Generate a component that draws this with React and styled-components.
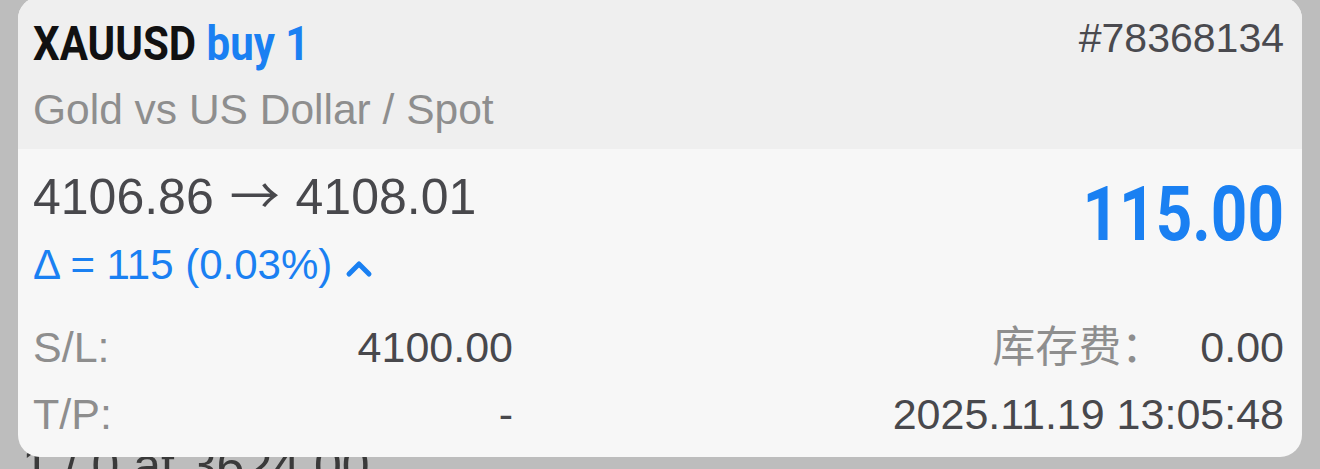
import React from 'react';
import styled, { createGlobalStyle } from 'styled-components';

const GlobalStyle = createGlobalStyle`
    html, body {
        margin: 0;
        padding: 0;
        background: #bdbdbd;
        width: 1320px;
        height: 469px;
        overflow: hidden;
    }
    body {
        font-family: "Liberation Sans", Arial, sans-serif;
    }
`;

const Page = styled.div`
    width: 1320px;
    height: 469px;
    overflow: hidden;
`;

const Card = styled.section`
    position: relative;
    z-index: 1;
    margin: -3px 18px 0 18px;
    border-radius: 22px;
    overflow: hidden;
    background: #f7f7f7;
`;

const Header = styled.header`
    background: #efefef;
    height: 152px;
    box-sizing: border-box;
    padding: 14px 18px 0 15px;
`;

const TopRow = styled.div`
    display: flex;
    justify-content: space-between;
    align-items: flex-start;
`;

// narrow bold face: Roboto squeezed horizontally
const Symbol = styled.h1`
    display: inline-block;
    margin: 0;
    font-family: Roboto, "Liberation Sans", sans-serif;
    font-weight: 700;
    font-size: 48px;
    line-height: 66px;
    color: #111;
    transform: scaleX(0.875);
    transform-origin: left center;
    white-space: nowrap;
`;

const Side = styled.span`
    color: #1a80f2;
`;

const Ticket = styled.div`
    margin-top: 2px;
    font-size: 41px;
    line-height: 50px;
    color: #4a4a4f;
`;

const Subtitle = styled.div`
    margin-top: 7px;
    font-size: 42.5px;
    line-height: 52px;
    color: #8e8e8e;
`;

const Body = styled.div`
    padding: 20px 18px 0 15px;
    height: 308px;
    box-sizing: border-box;
`;

const PriceRow = styled.div`
    display: flex;
    justify-content: space-between;
    align-items: flex-start;
`;

const Prices = styled.div`
    font-size: 50px;
    line-height: 56px;
    color: #48484c;
    white-space: nowrap;
`;

const Arrow = styled.span`
    font-family: "Noto Sans CJK SC", "DejaVu Sans", sans-serif;
    line-height: 0;
    margin: 0 2px;
`;

const Delta = styled.div`
    display: flex;
    align-items: center;
    gap: 13px;
    margin-top: 12px;
    font-size: 42px;
    line-height: 56px;
    color: #1a80f2;

    svg {
        margin-top: 8px;
    }
`;

const Profit = styled.div`
    font-family: Roboto, "Liberation Sans", sans-serif;
    font-weight: 700;
    font-size: 76px;
    line-height: 88px;
    color: #1a80f2;
    margin-top: 1px;
    transform: scaleX(0.84);
    transform-origin: right center;
`;

const Details = styled.div`
    display: grid;
    grid-template-columns: 480px 1fr;
    margin-top: 21px;
`;

const Pair = styled.div`
    display: flex;
    justify-content: ${(p) => (p.$end ? 'flex-end' : 'space-between')};
    align-items: baseline;
    gap: ${(p) => (p.$end ? '36px' : '0')};
    font-size: 43px;
    line-height: 67px;
`;

const Label = styled.span`
    color: #8e8e8e;
    font-family: "Liberation Sans", "Noto Sans CJK SC", sans-serif;
    line-height: 0;
`;

const Value = styled.span`
    color: #48484c;
`;

const Behind = styled.div`
    margin: -19px 0 0 22px;
    font-size: 50px;
    line-height: 56px;
    color: #3a3a3a;
    white-space: nowrap;
`;

const ChevronUp = () => (
    <svg width="28" height="18" viewBox="0 0 28 18" aria-hidden="true">
        <path
            d="M4 14 L14 4 L24 14"
            fill="none"
            stroke="#1a80f2"
            strokeWidth="5"
            strokeLinecap="round"
            strokeLinejoin="round"
        />
    </svg>
);

const position = {
    symbol: 'XAUUSD',
    side: 'buy 1',
    ticket: '#78368134',
    description: 'Gold vs US Dollar / Spot',
    open: '4106.86',
    current: '4108.01',
    delta: 'Δ = 115 (0.03%)',
    profit: '115.00',
    sl: '4100.00',
    tp: '-',
    swap: '0.00',
    time: '2025.11.19 13:05:48'
};

const App = () => (
    <Page>
        <GlobalStyle />
        <Card>
            <Header>
                <TopRow>
                    <Symbol>
                        {position.symbol} <Side>{position.side}</Side>
                    </Symbol>
                    <Ticket>{position.ticket}</Ticket>
                </TopRow>
                <Subtitle>{position.description}</Subtitle>
            </Header>
            <Body>
                <PriceRow>
                    <div>
                        <Prices>
                            {position.open} <Arrow>→</Arrow> {position.current}
                        </Prices>
                        <Delta>
                            {position.delta}
                            <ChevronUp />
                        </Delta>
                    </div>
                    <Profit>{position.profit}</Profit>
                </PriceRow>
                <Details>
                    <Pair>
                        <Label>S/L:</Label>
                        <Value>{position.sl}</Value>
                    </Pair>
                    <Pair $end>
                        <Label>库存费：</Label>
                        <Value>{position.swap}</Value>
                    </Pair>
                    <Pair>
                        <Label>T/P:</Label>
                        <Value>{position.tp}</Value>
                    </Pair>
                    <Pair $end>
                        <Value>{position.time}</Value>
                    </Pair>
                </Details>
            </Body>
        </Card>
        <Behind>1 / 0 at 3624.00</Behind>
    </Page>
);

export default App;
